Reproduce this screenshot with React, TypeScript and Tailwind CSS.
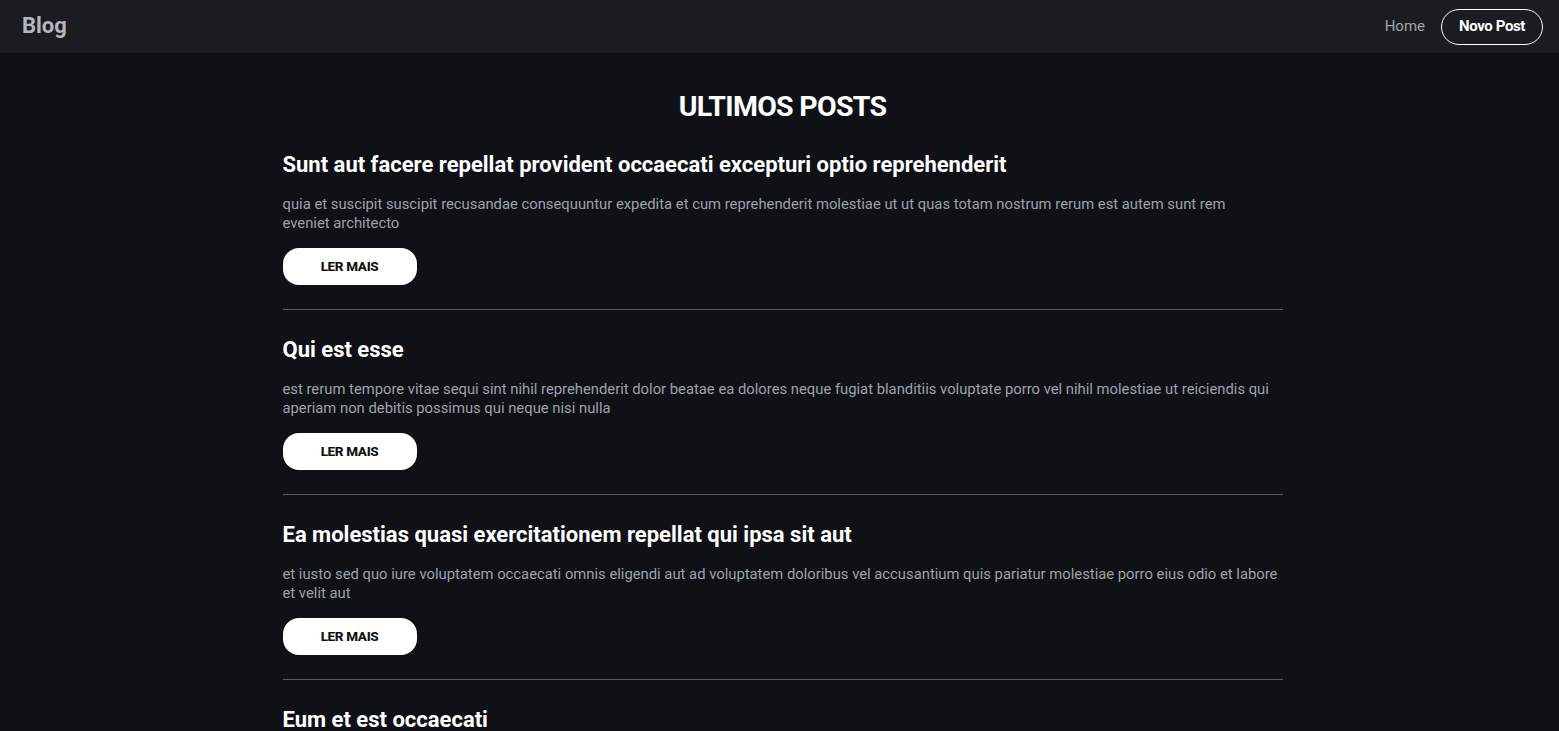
import { FC } from "react";

interface PostItem {
  id: number;
  title: string;
  body: string;
}

const posts: PostItem[] = [
  {
    id: 1,
    title:
      "Sunt aut facere repellat provident occaecati excepturi optio reprehenderit",
    body: "quia et suscipit suscipit recusandae consequuntur expedita et cum reprehenderit molestiae ut ut quas totam nostrum rerum est autem sunt rem eveniet\u00a0architecto",
  },
  {
    id: 2,
    title: "Qui est esse",
    body: "est rerum tempore vitae sequi sint nihil reprehenderit dolor beatae ea dolores neque fugiat blanditiis voluptate porro vel nihil molestiae ut reiciendis qui aperiam non debitis possimus qui neque nisi nulla",
  },
  {
    id: 3,
    title: "Ea molestias quasi exercitationem repellat qui ipsa sit aut",
    body: "et iusto sed quo iure voluptatem occaecati omnis eligendi aut ad voluptatem doloribus vel accusantium quis pariatur molestiae porro eius odio et labore et velit aut",
  },
  {
    id: 4,
    title: "Eum et est occaecati",
    body: "ullam et saepe reiciendis voluptatem adipisci sit amet autem assumenda provident rerum culpa quis hic commodi nesciunt rem tenetur doloremque ipsam iure quis sunt voluptatem rerum illo velit",
  },
];

const Header: FC = () => {
  return (
    <header className="flex items-center justify-between h-[53px] bg-[#1b1c21] pl-[22px] pr-4">
      <a href="#" className="text-[22px] font-bold text-[#b5b6bb] -mt-[3px]">
        Blog
      </a>
      <nav className="flex items-center">
        <a href="#" className="text-[15px] text-[#a3a4a8] mr-4">
          Home
        </a>
        <a
          href="#"
          className="flex items-center justify-center w-[102px] h-[36px] border border-white rounded-[18px] text-[15px] font-bold text-white tracking-tight"
        >
          Novo Post
        </a>
      </nav>
    </header>
  );
};

const PostCard: FC<{ post: PostItem }> = ({ post }) => {
  return (
    <div className="border-b border-[#5c5d60] pb-6 mb-[26px]">
      <h2 className="text-[22px] leading-[28px] font-bold text-white">
        {post.title}
      </h2>
      <p className="mt-[16px] text-[14.8px] leading-[19px] text-[#9ea2aa]">
        {post.body}
      </p>
      <button className="mt-[15px] w-[134px] h-[37px] rounded-[16px] bg-white text-[13.5px] font-extrabold text-[#111] tracking-tight">
        LER MAIS
      </button>
    </div>
  );
};

export default function App() {
  return (
    <div
      className="min-h-screen bg-[#0f1117]"
      style={{ fontFamily: "Roboto, 'Noto Sans', sans-serif" }}
    >
      <Header />
      <main className="w-[1000px] mx-auto pt-[36px] translate-x-[3px]">
        <h1 className="text-center text-[28.5px] leading-[36px] font-bold text-white tracking-tight">
          ULTIMOS POSTS
        </h1>
        <div className="mt-[26px]">
          {posts.map((post) => (
            <PostCard key={post.id} post={post} />
          ))}
        </div>
      </main>
    </div>
  );
}
